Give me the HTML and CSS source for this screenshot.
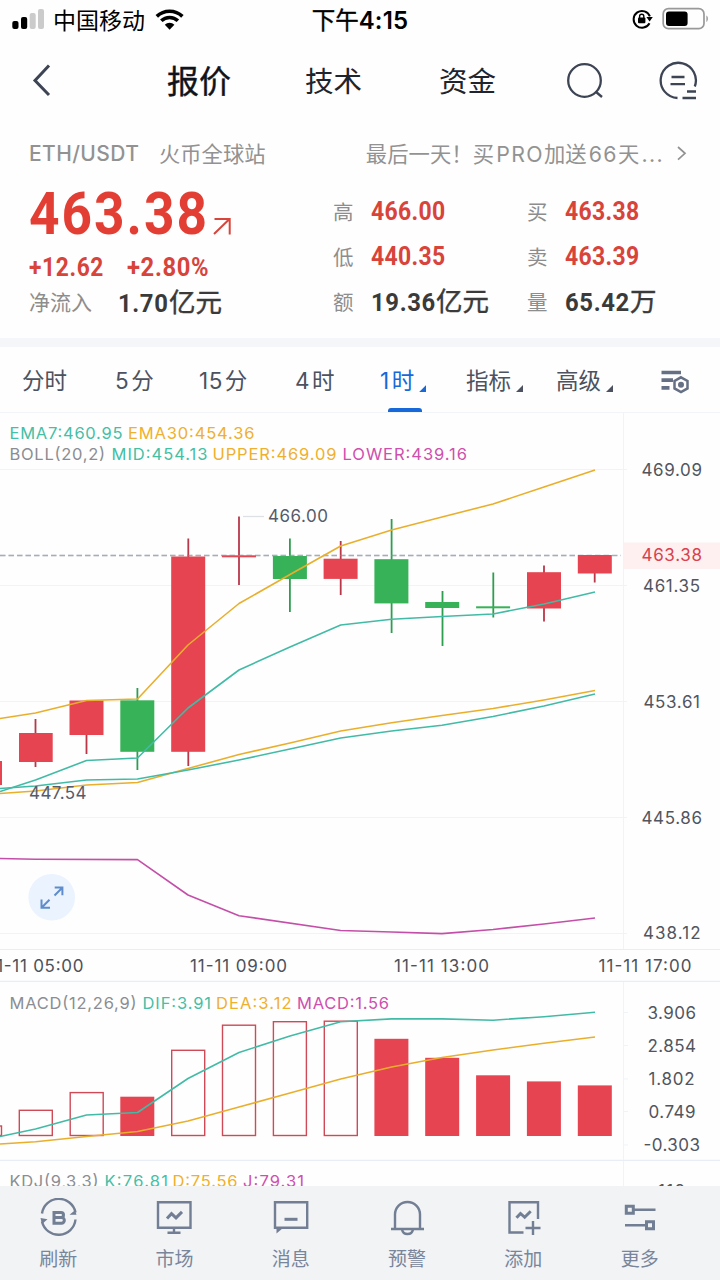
FILE: index.html
```html
<!DOCTYPE html>
<html lang="zh-CN">
<head>
<meta charset="utf-8">
<title>ETH/USDT</title>
<link rel="stylesheet" href="styles.css">
</head>
<body>
<div class="phone">
  <header class="status">
    <div class="status-left">
      <svg class="signal" width="33" height="22" viewBox="12 8 33 22"><rect x="12.3" y="21" width="6.2" height="8" rx="2"/><rect x="21" y="17" width="6.2" height="12" rx="2"/><rect class="dim" x="29.7" y="13" width="6" height="16" rx="2"/><rect class="dim" x="38" y="9" width="6" height="20" rx="2"/></svg>
      <span class="carrier">中国移动</span>
      <svg class="wifi" width="30" height="22" viewBox="155 8 30 22"><path d="M156.8 16.4a18.5 18.5 0 0 1 25.6 0M161.3 20.8a12 12 0 0 1 16.6 0"/><path class="wifi-dot" d="M164.8 24.7a7 7 0 0 1 9.6 0l-4.8 5z"/></svg>
    </div>
    <div class="clock">下午<b>4:15</b></div>
    <div class="status-right">
      <svg width="22" height="22" viewBox="632 9 22 22"><path class="lock-ring" d="M650.5 24.2a8.4 8.4 0 1 1 .4-6.8"/><path d="M647.4 18h6.4l-3.2 4.4z"/><rect x="639" y="18.5" width="7.4" height="5.8" rx="1"/><path class="shackle" d="M640.6 19v-1.7a2.1 2.1 0 0 1 4.2 0V19"/></svg>
      <svg width="48" height="24" viewBox="663 7 48 24"><rect class="cell" x="664.2" y="8.7" width="40.8" height="20" rx="5.2"/><rect x="667" y="11.5" width="21.6" height="14.6" rx="3"/><path class="tip" d="M707.4 15.5c2 1 2 5.4 0 6.4z"/></svg>
    </div>
  </header>

  <nav class="nav">
    <svg class="back" width="20" height="34" viewBox="31 64 20 34"><path d="M49 65.500L35 80.500L49 95"/></svg>
    <span class="nav-tab active">报价</span>
    <span class="nav-tab">技术</span>
    <span class="nav-tab">资金</span>
    <svg class="search" width="38" height="38" viewBox="566 62 38 38"><circle cx="584.500" cy="80.500" r="16.300"/><path d="M595.500 91.500L602 97"/></svg>
    <svg class="chat" width="40" height="40" viewBox="658 61 40 40"><path d="M694.800 86.500A17.600 17.600 0 1 0 677.500 98"/><path d="M671.500 77h13M670.500 84.200h14.500M687 91.500h9M682.500 98h13.500"/></svg>
  </nav>

  <section class="quote">
    <div class="pair-row">
      <span class="pair">ETH/USDT</span>
      <span class="exchange">火币全球站</span>
      <span class="promo">最后一天！买<i>PRO</i>加送<i>66</i>天<i>...</i></span>
      <svg width="12" height="16" viewBox="676 147 12 16"><path d="M678 148l7 6.300l-7 6.300"/></svg>
    </div>
    <div class="figures">
      <div class="main-price">
        <div class="price"><strong>463.38</strong><svg width="20" height="20" viewBox="212 218 20 20"><path d="M214 235L229.500 220M214.500 220H229.700V235.500"/></svg></div>
        <div class="change"><span>+12.62</span><span>+2.80%</span></div>
        <div class="inflow"><em>净流入</em><span class="amount"><b>1.70</b>亿元</span></div>
      </div>
      <dl class="stats">
        <dt>高</dt><dd class="up">466.00</dd><dt>买</dt><dd class="up">463.38</dd>
        <dt>低</dt><dd class="up">440.35</dd><dt>卖</dt><dd class="up">463.39</dd>
        <dt>额</dt><dd class="amount"><b>19.36</b>亿元</dd><dt>量</dt><dd class="amount"><b>65.42</b>万</dd>
      </dl>
    </div>
  </section>

  <div class="periods">
    <span class="p1">分时</span>
    <span class="p2"><i>5</i>分</span>
    <span class="p3"><i>15</i>分</span>
    <span class="p4"><i>4</i>时</span>
    <span class="p5 current"><i>1</i>时<u></u></span>
    <span class="p6">指标<u></u></span>
    <span class="p7">高级<u></u></span>
    <svg class="settings" width="29" height="26" viewBox="661 367 29 26"><path class="bars" d="M661.500 371.500h19.500M661.500 379.200h11.500M661.500 386.800h8"/><path d="M681 376.300l6.500 3.700v7.400l-6.500 3.700l-6.500-3.700v-7.400z"/><circle class="hub" cx="681" cy="383.700" r="3"/></svg>
  </div>

  <main class="charts">
    <svg class="chart" width="720" height="536" viewBox="0 413 720 536">
      <path class="grid" d="M0 469.500H627M0 585.500H627M0 701.500H627M0 817.500H627M0 933.500H627M623.500 413V949"/>
      <g class="legend">
        <text x="9.500" y="439.300" textLength="113" class="teal">EMA7:460.95</text>
        <text x="128" y="439.300" textLength="126.500" class="gold">EMA30:454.36</text>
        <text x="9.500" y="459.800" textLength="95.500" class="gray">BOLL(20,2)</text>
        <text x="111.500" y="459.800" textLength="96" class="teal">MID:454.13</text>
        <text x="212.500" y="459.800" textLength="124" class="gold">UPPER:469.09</text>
        <text x="342.500" y="459.800" textLength="124.500" class="pink">LOWER:439.16</text>
      </g>
      <path class="last-line" d="M0 555.500H621"/>
      <g class="red">
        <path d="M35.500 719V767M86.500 701V754M188.300 538.500V766M239 516.500V585M340.700 541V595M544 565.500V621.500M594.700 556V582.500"/>
        <rect x="-31.500" y="761" width="33.500" height="24"/>
        <rect x="19" y="733" width="33.700" height="29"/>
        <rect x="69.500" y="700.500" width="34" height="34.500"/>
        <rect x="171.200" y="556.500" width="34" height="195.300"/>
        <rect x="222" y="555.300" width="34" height="2"/>
        <rect x="323.600" y="558.700" width="34" height="20.200"/>
        <rect x="527" y="572.200" width="34" height="36.300"/>
        <rect x="577.800" y="555" width="34" height="18.500"/>
      </g>
      <g class="green">
        <path d="M137.400 688V770M289.900 538.500V612M391.600 519V633M442.500 591V646M493.300 572.500V617.500"/>
        <rect x="120.300" y="700.300" width="34" height="51.500"/>
        <rect x="272.900" y="556" width="34" height="23"/>
        <rect x="374.400" y="559.200" width="34" height="44.200"/>
        <rect x="425.200" y="602" width="34" height="6"/>
        <rect x="476.100" y="606.300" width="34" height="2"/>
      </g>
      <path class="last-line over" d="M0 555.500H577"/>
      <g class="lines">
        <path class="gold" d="M0 718.500L35.500 713L86.500 700.500L137.500 699L188 645L239 603.500L290 574.500L340.700 546L391.600 530L442 517L493 504L544 487L595 470"/>
        <path class="gold" d="M0 793.500L35.500 791L86.500 785L137.500 782.500L188 768.500L239 754.500L290 743L340.700 731L391.600 722.700L442 715.500L493 708.500L544 700L595 690.500"/>
        <path class="teal" d="M0 791.500L35.500 780L86.500 760.500L137.500 758L188 708L239 670L290 647L340.700 625L391.600 619.300L442 616.500L493 614L544 604L595 592"/>
        <path class="teal" d="M0 788.500L35.500 786L86.500 780L137.500 779L188 770L239 760L290 749L340.700 738L391.600 731L442 725.300L493 716.500L544 706L595 694"/>
        <path class="pink" d="M0 858.500L35.500 859.300L137.500 859.600L188 895L239 915.700L340.700 930.500L391.600 932L442 933.600L493 929.500L544 924L595 918"/>
      </g>
      <path class="leader" d="M243 516.500H264"/>
      <g class="label">
        <text x="268" y="522.300" textLength="60">466.00</text>
        <text x="29" y="798.500" textLength="57.500">447.54</text>
      </g>
      <rect class="last-tag" x="624" y="542.500" width="96" height="26.500"/>
      <g class="scale">
        <text x="641.500" y="475.700" textLength="60.500">469.09</text>
        <text x="641.500" y="561.300" textLength="60.500" class="red-text">463.38</text>
        <text x="643" y="592" textLength="57">461.35</text>
        <text x="643.500" y="707.700" textLength="56.500">453.61</text>
        <text x="641.500" y="823.500" textLength="60.500">445.86</text>
        <text x="643" y="939.300" textLength="57.500">438.12</text>
      </g>
      <circle class="expand" cx="51.700" cy="897.300" r="23.300"/>
      <path class="expand-icon" d="M54.700 887.500H62.400V895.200M62 888L54.500 895.500M41.500 899.500V907.700H50M42 907.300L49.500 899.800"/>
    </svg>

    <svg class="chart times" width="720" height="33" viewBox="0 949 720 33">
      <path class="frame" d="M0 949.300H720M0 981.600H720"/>
      <text x="-11.500" y="972.200" textLength="95">11-11 05:00</text>
      <text x="190" y="972.200" textLength="97">11-11 09:00</text>
      <text x="394" y="972.200" textLength="95">11-11 13:00</text>
      <text x="598.500" y="972.200" textLength="93">11-11 17:00</text>
    </svg>

    <svg class="chart" width="720" height="179" viewBox="0 982 720 179">
      <path class="grid" d="M623.500 982V1161M623 1012.500h5M623 1045.500h5M623 1079h5M623 1111.500h5M623 1145h5"/>
      <path class="frame" d="M0 1160.400H720"/>
      <g class="legend">
        <text x="9.500" y="1008.500" textLength="127" class="gray">MACD(12,26,9)</text>
        <text x="142.500" y="1008.500" textLength="68.500" class="teal">DIF:3.91</text>
        <text x="216" y="1008.500" textLength="75.500" class="gold">DEA:3.12</text>
        <text x="297" y="1008.500" textLength="92" class="pink">MACD:1.56</text>
      </g>
      <g class="hollow">
        <rect x="-31.500" y="1126" width="33" height="9.500"/>
        <rect x="19.300" y="1110.300" width="33" height="25.200"/>
        <rect x="70.200" y="1092.600" width="33" height="42.900"/>
        <rect x="171.700" y="1050.300" width="33" height="85.200"/>
        <rect x="222.500" y="1025.200" width="33" height="110.300"/>
        <rect x="273.400" y="1021.700" width="33" height="113.800"/>
        <rect x="324.300" y="1021.200" width="33" height="114.300"/>
      </g>
      <g class="red">
        <rect x="120.300" y="1096.700" width="34" height="39.300"/>
        <rect x="374.400" y="1038.800" width="34" height="97.200"/>
        <rect x="425.200" y="1057.800" width="34" height="78.200"/>
        <rect x="476.100" y="1075.300" width="34" height="60.700"/>
        <rect x="526.900" y="1081.400" width="34" height="54.600"/>
        <rect x="577.800" y="1085.400" width="34" height="50.600"/>
      </g>
      <g class="lines">
        <path class="teal" d="M0 1136.500L35.500 1129L86.500 1115L137.500 1112.500L188 1078.500L239 1052.500L290 1036L340.700 1021.800L391.600 1018.900L442 1018.900L493 1020.200L544 1016.700L595 1012.300"/>
        <path class="gold" d="M0 1144L35.500 1141.700L86.500 1136.500L137.500 1131.500L188 1121L239 1107L290 1093L340.700 1079L391.600 1067L442 1057.500L493 1050L544 1043.300L595 1037"/>
      </g>
      <g class="scale">
        <text x="647.500" y="1018.500" textLength="48.500">3.906</text>
        <text x="647.500" y="1051.500" textLength="48.500">2.854</text>
        <text x="648.500" y="1084.500" textLength="46">1.802</text>
        <text x="648.500" y="1117.500" textLength="47">0.749</text>
        <text x="643.500" y="1150.800" textLength="56.500">-0.303</text>
      </g>
    </svg>

    <svg class="chart" width="720" height="25" viewBox="0 1161 720 25">
      <path class="grid" d="M623.500 1161V1186"/>
      <g class="legend">
        <text x="9.500" y="1187.300" textLength="89" class="gray">KDJ(9,3,3)</text>
        <text x="104.500" y="1187.300" textLength="63.500" class="teal">K:76.81</text>
        <text x="172.500" y="1187.300" textLength="65" class="gold">D:75.56</text>
        <text x="243" y="1187.300" textLength="61" class="pink">J:79.31</text>
      </g>
      <g class="scale"><text x="658" y="1196.700" textLength="27">118</text></g>
    </svg>
  </main>

  <footer class="tabbar">
    <div class="tab">
      <svg width="40" height="40" viewBox="38 1198 40 40"><path d="M42 1213.500a17 17 0 0 1 33.500-1M75.500 1219.500a17 17 0 0 1-33.500 2"/><path class="solid" d="M69.500 1214.700l5.500-4.500l1.500 4.500zM47.500 1219.300l-5.500 4.700l-1.500-6z"/><path class="thick" d="M54 1212.500h7a2.500 2.500 0 0 1 0 5h-7zM54 1217.500h7.500a2.800 2.800 0 0 1 0 5.700H54z"/></svg>
      <span>刷新</span>
    </div>
    <div class="tab">
      <svg width="40" height="40" viewBox="154.500 1198 40 40"><path d="M158.500 1202.300h32.500v25.500h-32.500zM174.500 1228v5M168 1232.800h13"/><path class="thick" d="M167.500 1218.500l4.500-4.800l4.500 4.200l6-6"/></svg>
      <span>市场</span>
    </div>
    <div class="tab">
      <svg width="40" height="40" viewBox="271 1198 40 40"><path d="M275 1202.300h32.200v25.500h-32.200z"/><path class="solid" d="M276.500 1227v6.500l6.500-5.500z"/><path class="thick" d="M284.500 1219.300h13"/></svg>
      <span>消息</span>
    </div>
    <div class="tab">
      <svg width="40" height="40" viewBox="387.500 1198 40 40"><path d="M395.500 1229v-14.500a12.500 12.500 0 0 1 25 0v14.500M391.500 1229h33M402.500 1229.500a5.600 5.600 0 0 0 11 0"/></svg>
      <span>预警</span>
    </div>
    <div class="tab">
      <svg width="40" height="40" viewBox="503.500 1198 40 40"><path d="M524 1232.500h-14v-30.200h28.500v16.700M526 1228h15M533.500 1221v14"/><path class="thick" d="M517 1217.800l4-4.300l4.200 3.800l6-6"/></svg>
      <span>添加</span>
    </div>
    <div class="tab">
      <svg width="40" height="40" viewBox="620 1198 40 40"><path class="thick" d="M626.300 1206.300h7v7h-7zM646.500 1221.800h7v7h-7z"/><path d="M634 1209.800h21.500M625 1225.300h21"/></svg>
      <span>更多</span>
    </div>
  </footer>
</div>
</body>
</html>
```

FILE: styles.css
```css
* { box-sizing: border-box; }
body { margin: 0; background: #fff; font-family: Inter, "Noto Sans CJK SC", sans-serif; }
i, em { font-style: normal; }
svg { display: block; flex: none; fill: none; }
.phone { width: 720px; height: 1280px; overflow: hidden; display: flex; flex-direction: column; background: #fefefe; }

/* Status bar */
.status { height: 40px; display: grid; grid-template-columns: 1fr auto 1fr; align-items: center; padding: 0 10px 2px 12px; color: #000; }
.status svg { fill: #000; }
.status-left { display: flex; align-items: center; }
.carrier { font: 23px/32px "Noto Sans CJK SC", sans-serif; margin: 0 10px 0 8px; }
.signal .dim { fill: #cbcbcb; }
.wifi path { fill: none; stroke: #000; stroke-width: 3.6; }
.wifi .wifi-dot { fill: #000; stroke: none; }
.clock { font-size: 23.5px; line-height: 32px; margin: 3px 2px 0 0; -webkit-text-stroke: .4px #000; }
.clock b { font-weight: 600; font-size: 24px; -webkit-text-stroke: 0; letter-spacing: .2px; }
.status-right { display: flex; justify-content: flex-end; align-items: center; gap: 9px; }
.status .lock-ring { fill: none; stroke: #000; stroke-width: 2; }
.status .shackle { fill: none; stroke: #000; stroke-width: 1.4; }
.status .cell { fill: none; stroke: #999; stroke-width: 1.7; }
.status .tip { fill: #999; }

/* Navigation */
.nav { height: 82px; display: flex; align-items: center; color: #20242d; font-size: 28.5px; }
.nav svg { stroke: #3d4454; stroke-width: 2.3; }
.nav .back { margin-left: 31px; stroke-width: 3; }
.nav-tab { line-height: 40px; width: 60px; padding-top: 2px; white-space: nowrap; }
.nav-tab.active { margin-left: 116px; width: 64px; font-size: 32px; color: #10131b; -webkit-text-stroke: .4px #10131b; }
.nav-tab + .nav-tab { margin-left: 74px; }
.nav .search { margin-left: 67px; }
.nav .chat { margin-left: 54px; }

/* Quote */
.quote { height: 225px; padding: 15px 0 0 29px; border-bottom: 9px solid #f5f6f9; }
.pair-row { height: 34px; display: flex; align-items: center; color: #929292; font-size: 21.3px; line-height: 32px; }
.pair { width: 130px; letter-spacing: .4px; font-size: 21px; font-weight: 500; }
.promo { margin-left: auto; letter-spacing: .1px; }
.promo i { letter-spacing: 1.4px; margin-left: 2px; }
.pair-row svg { margin: 0 32px 0 12px; stroke: #929292; stroke-width: 1.7; }
.figures { display: flex; }
.main-price { width: 304px; }
.price { height: 76px; display: flex; align-items: center; }
/* Digits are condensed slightly to get a narrow, DIN-like set */
.price strong { font: 700 59.5px/76px Roboto, sans-serif; letter-spacing: 2.2px; color: #e33e33; width: 183px; padding-top: 9px; transform: scaleX(.895); transform-origin: 0 50%; }
.price svg { stroke: #d8453b; stroke-width: 2; margin-top: 36px; }
.change { display: flex; height: 36px; color: #d8433a; font: 700 25px/36px Roboto, sans-serif; padding-top: 3px; letter-spacing: .7px; }
.change span { width: 98px; transform: scaleX(.91); transform-origin: 0 50%; }
.change span + span { transform: scaleX(.95); }
.inflow { display: flex; height: 34px; align-items: center; line-height: 34px; padding-top: 5px; }
.inflow em { color: #8d8d8d; font-size: 21px; width: 89px; }
.amount { color: #3a3a3a; font-size: 26.5px; -webkit-text-stroke: .4px #3a3a3a; white-space: nowrap; }
.amount b { display: inline-block; font-family: Roboto, sans-serif; font-size: 26.5px; letter-spacing: .7px; -webkit-text-stroke: 0; transform: scaleX(.9); transform-origin: 0 50%; margin-right: -7px; }
.inflow .amount b { margin-right: -5px; }
.stats { margin: 18px 0 0; display: grid; grid-template-columns: 38px 156px 38px 130px; grid-auto-rows: 45px; line-height: 45px; }
.stats dt { color: #8d8d8d; font-size: 20.5px; padding-top: 1px; }
.stats dd { margin: 0; }
.stats .up { font: 700 25.5px/45px Roboto, sans-serif; color: #d8433a; letter-spacing: .4px; transform: scaleX(.9); transform-origin: 0 50%; }

/* Period tabs */
.periods { height: 66px; display: grid; grid-template-columns: 93px 84px 96px 85px 86px 90px 105px auto; align-items: start; padding-left: 22px; font-size: 22.5px; line-height: 68px; color: #4c5260; border-bottom: 1px solid #f2f5f8; }
.periods span { position: relative; height: 66px; white-space: nowrap; }
.periods i { letter-spacing: .5px; margin-right: 2px; }
.periods .current { color: #1768d9; }
.periods .current::after { content: ""; position: absolute; left: 8px; bottom: 1px; width: 34px; height: 4px; border-radius: 3px 3px 0 0; background: #1768d9; }
.periods u { display: inline-block; margin-left: 5px; width: 7px; height: 7px; vertical-align: -3px; background: currentColor; clip-path: polygon(100% 0, 100% 100%, 0 100%); }
.settings { margin-top: 21px; stroke: #667084; stroke-width: 2.5; }
.settings .bars { stroke-width: 3.7; }
.settings .hub { fill: #667084; stroke: none; }

/* Charts */
.charts { height: 773px; }
.chart { font-family: Inter, sans-serif; font-size: 17px; }
.grid { stroke: #eff4f8; }
.frame { stroke: #e9edf5; stroke-width: 1.5; }
.legend { font-size: 16.5px; }
.legend .teal { fill: #45bfa5; }
.legend .gold { fill: #efb02e; }
.legend .pink { fill: #cf4fae; }
.legend .gray { fill: #8b8d92; }
.lines path { stroke-width: 1.6; stroke-linejoin: round; }
.lines .teal { stroke: #42bba6; }
.lines .gold { stroke: #e9af2c; }
.lines .pink { stroke: #c44fa8; }
.red { fill: #e54450; stroke: none; }
.red path { stroke: #b8384a; stroke-width: 1.8; }
.green { fill: #37b258; }
.green path { stroke: #2f9d50; stroke-width: 1.8; }
.hollow { stroke: #cf4a57; stroke-width: 1.4; }
.last-line { stroke: #a8adb7; stroke-width: 1.5; stroke-dasharray: 5.500 3; }
.last-line.over { opacity: .3; }
.leader { stroke: #dde0e4; stroke-width: 1.3; }
.label { fill: #575b69; }
.scale { fill: #51555e; }
.scale .red-text { fill: #d9414d; }
.last-tag { fill: #fef0f0; }
.expand { fill: #eaf3fe; }
.expand-icon { stroke: #5f8dcc; stroke-width: 2; }
.times { fill: #4d515a; }

/* Bottom bar */
.tabbar { height: 94px; background: #f1f3f5; display: grid; grid-template-columns: repeat(6, 116.3px); padding-top: 12px; }
.tab { display: flex; flex-direction: column; align-items: center; color: #79859a; font-size: 19px; }
.tab svg { stroke: #727e93; stroke-width: 2.4; }
.tab .thick { stroke-width: 3; }
.tab .solid { fill: #727e93; stroke: none; }
.tab span { line-height: 28px; margin-top: 8px; }
```
